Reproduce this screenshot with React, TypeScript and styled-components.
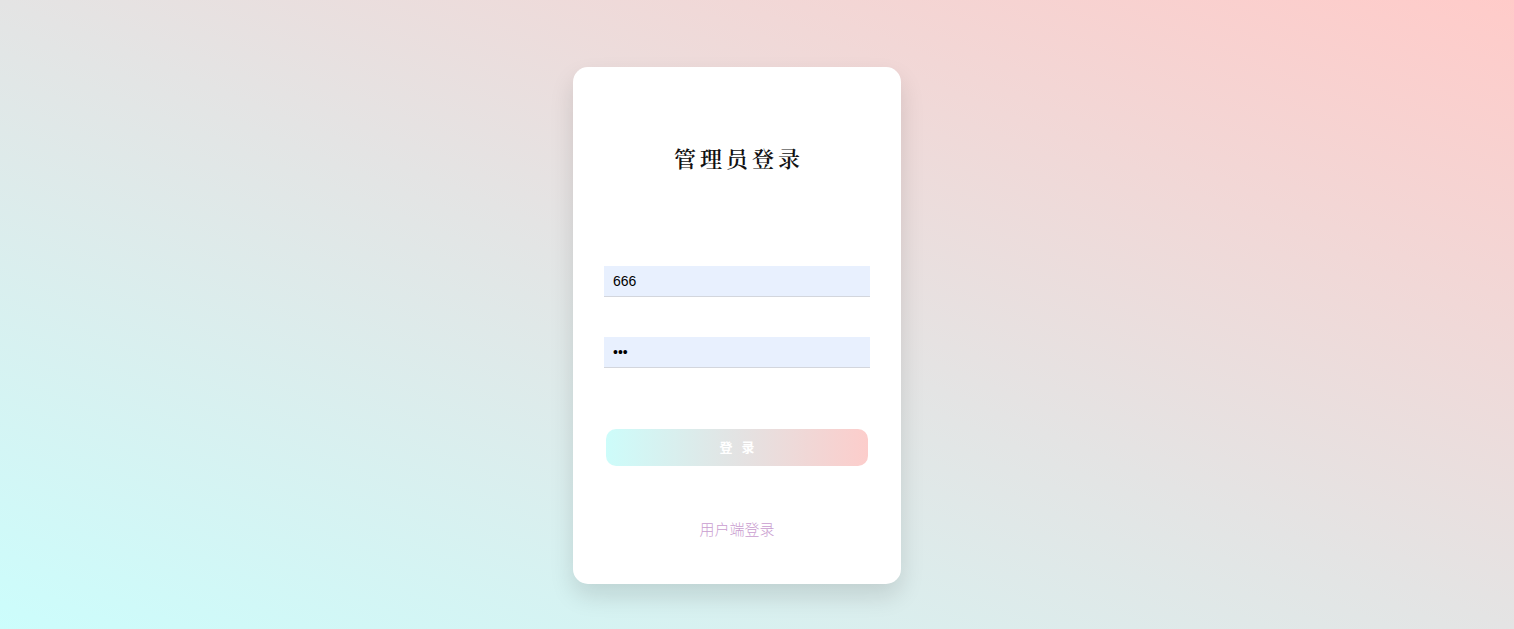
import styled, { createGlobalStyle } from 'styled-components';

const GlobalStyle = createGlobalStyle`
  html, body {
    margin: 0;
    padding: 0;
    height: 100%;
  }
  body {
    font-family: "Liberation Sans", "Noto Sans CJK SC", sans-serif;
  }
  #root {
    height: 100%;
  }
`;

const Page = styled.div`
  height: 100vh;
  display: flex;
  justify-content: center;
  align-items: flex-start;
  background: linear-gradient(to top right, #ccfdfc 0%, #e4e4e4 50%, #ffcbc9 100%);
  box-sizing: border-box;
  padding: 67px 40px 0 0;
`;

const Card = styled.div`
  width: 328px;
  box-sizing: border-box;
  padding: 76px 31px 44px;
  background: #fff;
  border-radius: 15px;
  box-shadow: 0 12px 24px rgba(0, 0, 0, 0.12);
  display: flex;
  flex-direction: column;
`;

const Title = styled.h2`
  margin: 0;
  text-align: center;
  font-family: "Noto Serif CJK SC", "Noto Sans CJK SC", serif;
  font-size: 22px;
  font-weight: 600;
  line-height: 30px;
  letter-spacing: 4px;
  padding-left: 4px;
  color: #111;
`;

const Field = styled.input<{ gap: number }>`
  display: block;
  margin-top: ${({ gap }) => gap}px;
  width: 100%;
  height: 31px;
  box-sizing: border-box;
  border: none;
  border-bottom: 1px solid #d3d6dd;
  background: #e8f0fe;
  padding: 0 9px;
  font-family: "Liberation Sans", sans-serif;
  font-size: 14px;
  color: #000;
  outline: none;
`;

const LoginButton = styled.button`
  margin: 61px 2px 0;
  height: 37px;
  border: none;
  border-radius: 10px;
  background: linear-gradient(to right, #cdfcfa, #e3e3e3 50%, #fccdcb);
  color: #fff;
  font-family: "Noto Sans CJK SC", sans-serif;
  font-size: 13px;
  font-weight: 700;
  letter-spacing: 9px;
  padding: 0 0 2px 9px;
  cursor: pointer;
`;

const SwitchLink = styled.a`
  margin-top: 52px;
  align-self: center;
  line-height: 22px;
  font-family: "Noto Sans CJK SC", sans-serif;
  font-size: 15px;
  font-weight: 300;
  color: #c99ccf;
  text-decoration: none;
  cursor: pointer;
`;

const App = () => {
  return (
    <>
      <GlobalStyle />
      <Page>
        <Card>
          <Title>管理员登录</Title>
          <Field gap={93} type="text" defaultValue="666" />
          <Field gap={40} type="password" defaultValue="123" />
          <LoginButton>登录</LoginButton>
          <SwitchLink>用户端登录</SwitchLink>
        </Card>
      </Page>
    </>
  );
};

export default App;
